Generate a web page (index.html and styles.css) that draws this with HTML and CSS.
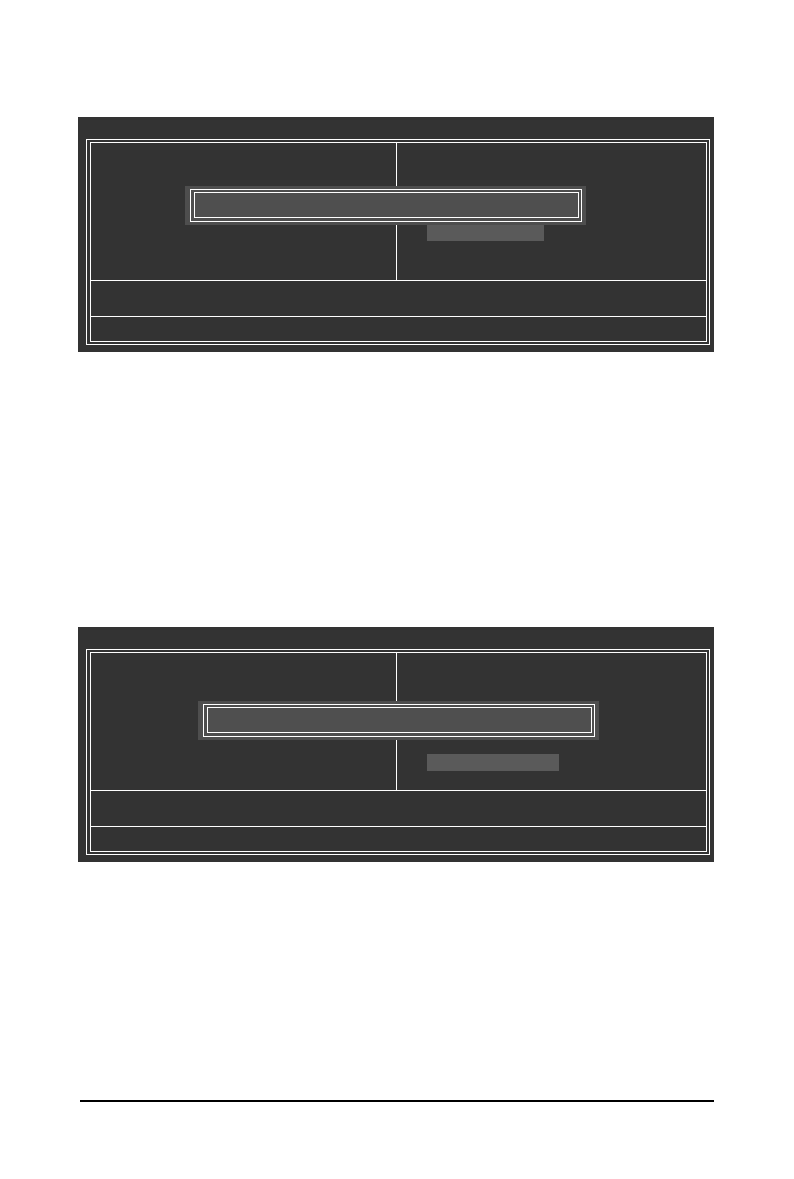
FILE: index.html
```html
<!DOCTYPE html>
<html lang="en">
<head>
    <meta charset="UTF-8">
    <meta name="viewport" content="width=device-width, initial-scale=1.0">
    <title>BIOS Setup</title>
    <link rel="stylesheet" href="styles.css">
</head>
<body>
<div class="page">

    <!-- first setup screen -->
    <div class="screen">
        <div class="frame">
            <div class="frame-inner">
                <div class="menu">
                    <div class="menu-items"></div>
                    <div class="menu-help">
                        <div class="value-bar"></div>
                    </div>
                </div>
                <div class="keys"></div>
                <div class="status"></div>
            </div>
        </div>
        <div class="dialog">
            <div class="dialog-frame">
                <div class="dialog-field"></div>
            </div>
        </div>
    </div>

    <!-- second setup screen -->
    <div class="screen screen-b">
        <div class="frame">
            <div class="frame-inner">
                <div class="menu">
                    <div class="menu-items"></div>
                    <div class="menu-help">
                        <div class="value-bar value-bar-b"></div>
                    </div>
                </div>
                <div class="keys"></div>
                <div class="status"></div>
            </div>
        </div>
        <div class="dialog dialog-b">
            <div class="dialog-frame">
                <div class="dialog-field"></div>
            </div>
        </div>
    </div>

    <hr class="page-rule">
</div>
</body>
</html>
```

FILE: styles.css
```css
*{
    margin: 0;
    padding: 0;
    box-sizing: border-box;
}
body{
    background-color: #fff;
    font-family: "Liberation Sans", Arial, sans-serif;
}
.page{
    padding-top: 117px;
}

/* screen panel */
.screen{
    position: relative;
    width: 636px;
    height: 235px;
    margin-left: 78px;
    background-color: #333;
    padding: 22px 4px 7px 8px;
}
.screen-b{
    margin-top: 275px;
}
.frame{
    height: 100%;
    border: 1px solid #fff;
    padding: 2px 2px 2px 3px;
}
.frame-inner{
    height: 100%;
    border: 1px solid #fff;
    display: flex;
    flex-direction: column;
}
.menu{
    display: flex;
    height: 138px;
    border-bottom: 1px solid #fff;
}
.menu-items{
    width: 306px;
    border-right: 1px solid #fff;
}
.menu-help{
    flex: 1;
    padding-left: 30px;
}
.value-bar{
    width: 117px;
    height: 16px;
    margin-top: 82px;
    background-color: #5a5a5a;
}
.value-bar-b{
    width: 132px;
    height: 17px;
    margin-top: 101px;
}
.keys{
    height: 36px;
    border-bottom: 1px solid #fff;
}
.status{
    flex: 1;
}

/* popup over the menu */
.dialog{
    position: absolute;
    left: 107px;
    top: 69px;
    width: 401px;
    height: 39px;
    background-color: #4e4e4e;
    padding: 3px 4px 3px 5px;
}
.dialog-b{
    left: 120px;
    top: 74px;
}
.dialog-frame{
    height: 100%;
    border: 1px solid #fff;
    padding: 2px 2px 3px 3px;
}
.dialog-field{
    height: 100%;
    border: 1px solid #fff;
    background-color: #4f4f4f;
}

.page-rule{
    width: 634px;
    height: 2px;
    margin: 238px 0 0 80px;
    border: 0;
    background-color: #000;
}
```
